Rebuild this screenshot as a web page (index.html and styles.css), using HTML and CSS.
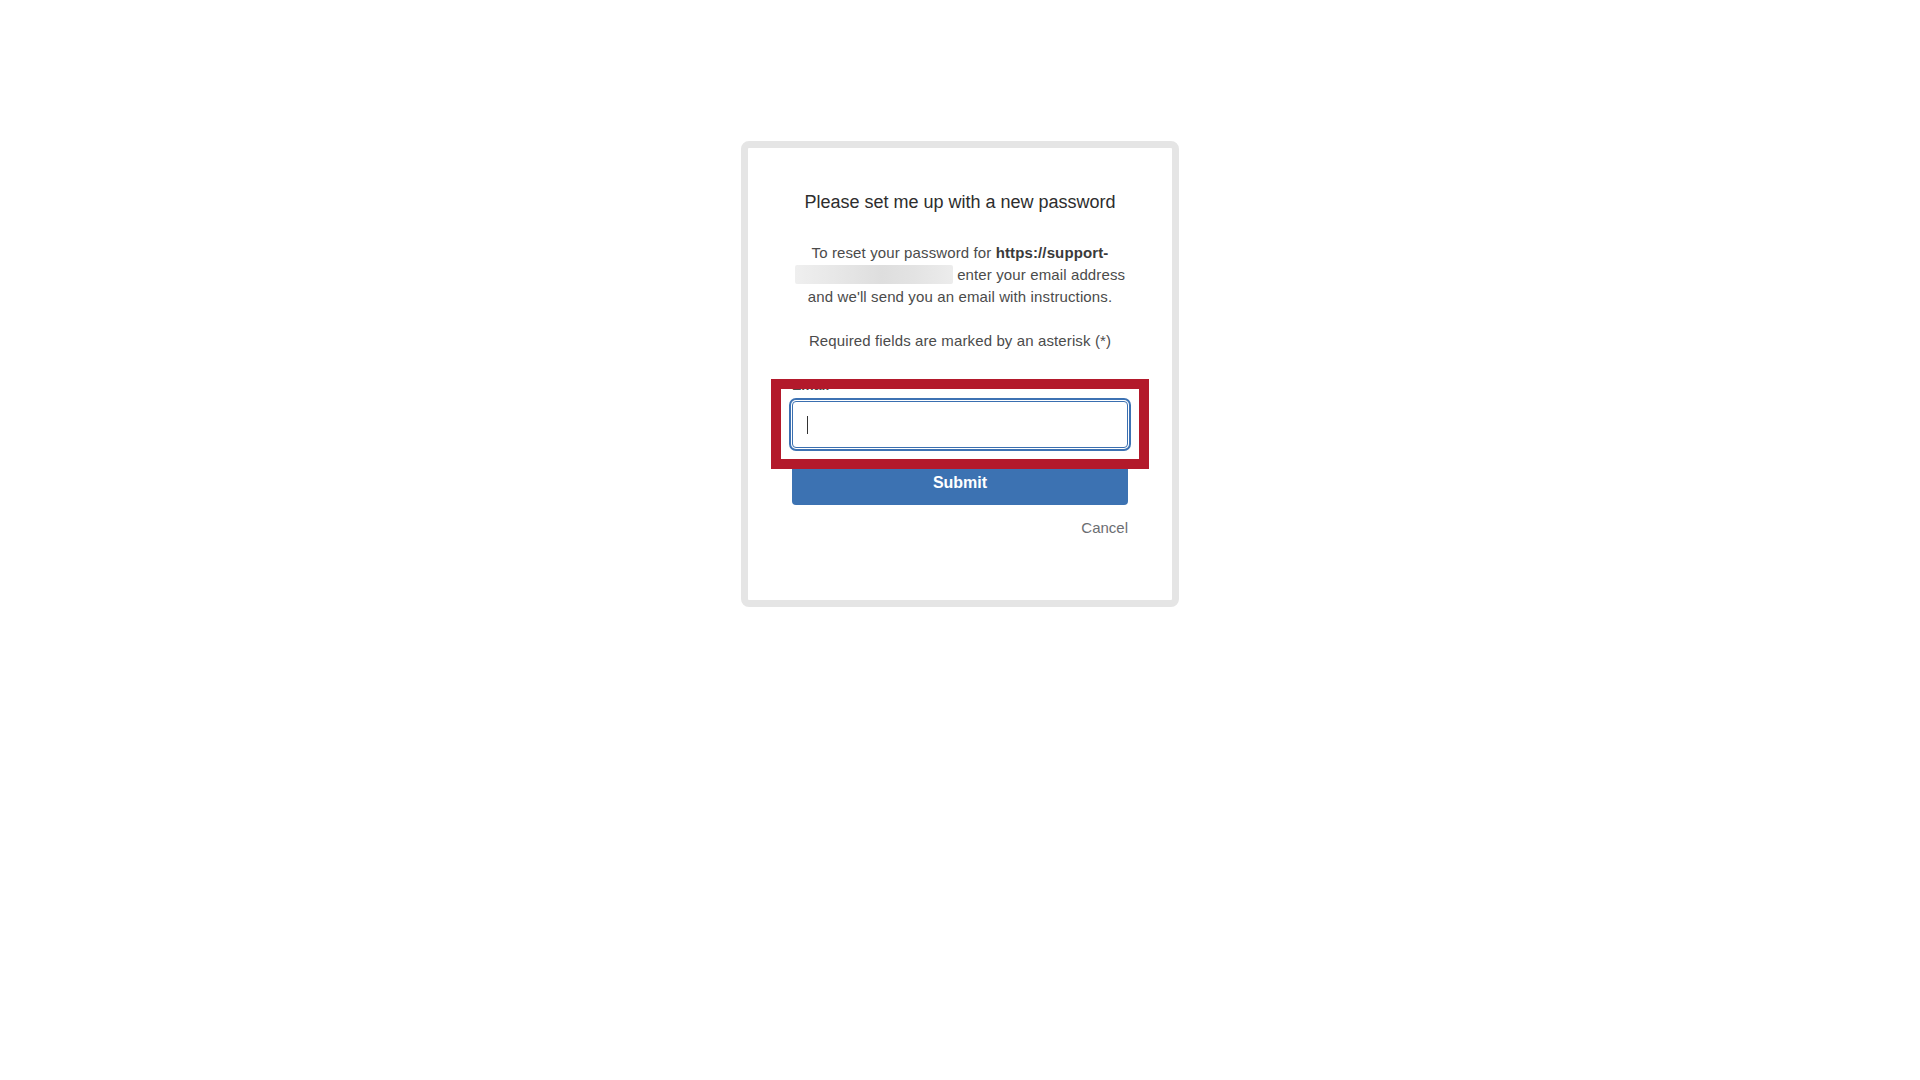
FILE: index.html
```html
<!DOCTYPE html>
<html lang="en">
<head>
<meta charset="utf-8">
<title>Reset password</title>
<link rel="stylesheet" href="styles.css">
</head>
<body>
<main class="page">
  <section class="card">
    <h1 class="title">Please set me up with a new password</h1>
    <p class="intro">
      <span class="line">To reset your password for <b>https://support-</b></span>
      <span class="line"><span class="blur"></span> enter your email address</span>
      <span class="line">and we'll send you an email with instructions.</span>
    </p>
    <p class="required">Required fields are marked by an asterisk (*)</p>
    <div class="field">
      <label class="label">Email</label>
      <div class="input"><span class="caret"></span></div>
      <div class="highlight"></div>
    </div>
    <button class="submit">Submit</button>
    <div class="actions"><a class="cancel">Cancel</a></div>
  </section>
</main>
</body>
</html>
```
FILE: styles.css
```css
html, body {
  margin: 0;
  padding: 0;
  background: #ffffff;
}
body {
  font-family: "Liberation Sans", Arial, sans-serif;
  color: #4a4a4a;
}
.page {
  display: flex;
  justify-content: center;
  padding-top: 141px;
}
.card {
  box-sizing: border-box;
  width: 438px;
  border: 7px solid #e5e5e5;
  border-radius: 8px;
  background: #fff;
  padding: 42px 44px 62px;
  display: flex;
  flex-direction: column;
}
.title {
  margin: 0;
  font-size: 18px;
  line-height: 24px;
  font-weight: normal;
  color: #2d2d2d;
  text-align: center;
  white-space: nowrap;
}
.intro {
  margin: 28px 0 0;
  font-size: 15px;
  letter-spacing: 0.12px;
  line-height: 22px;
  color: #4b4b4b;
  display: flex;
  flex-direction: column;
  align-items: center;
}
.line {
  white-space: nowrap;
}
.intro b {
  color: #3a3a3a;
  font-weight: bold;
}
.blur {
  display: inline-block;
  width: 158px;
  height: 19px;
  vertical-align: -4px;
  background: linear-gradient(90deg, #efefef 0%, #e6e6e6 30%, #dedede 55%, #e3e3e3 75%, #ececec 100%);
  border-radius: 2px;
}
.required {
  margin: 22px 0 0;
  font-size: 15px;
  letter-spacing: 0.12px;
  line-height: 22px;
  color: #4b4b4b;
  text-align: center;
  white-space: nowrap;
}
.field {
  position: relative;
  margin-top: 23px;
  display: flex;
  flex-direction: column;
}
.label {
  font-size: 14px;
  line-height: 20px;
  font-weight: bold;
  color: #4a4a4a;
}
.input {
  box-sizing: border-box;
  margin-top: 6px;
  height: 47px;
  border: 1px solid #3a6fb0;
  border-radius: 4px;
  box-shadow: 0 0 0 1px #ffffff, 0 0 0 3px #3d72b3;
  padding-left: 14px;
  display: flex;
  align-items: center;
  background: #fff;
}
.caret {
  display: block;
  width: 1px;
  height: 18px;
  background: #333;
}
.highlight {
  position: absolute;
  box-sizing: border-box;
  top: 4px;
  left: -21px;
  width: 378px;
  height: 90px;
  border: 10px solid #b3192b;
}
.submit {
  margin-top: 13px;
  height: 44px;
  border: none;
  border-radius: 4px;
  background: #3c72b2;
  color: #fff;
  font-family: "Liberation Sans", Arial, sans-serif;
  font-size: 16px;
  font-weight: bold;
  padding: 0;
}
.actions {
  margin-top: 13px;
  display: flex;
  justify-content: flex-end;
}
.cancel {
  font-size: 15px;
  line-height: 20px;
  color: #6b6e72;
}
```
